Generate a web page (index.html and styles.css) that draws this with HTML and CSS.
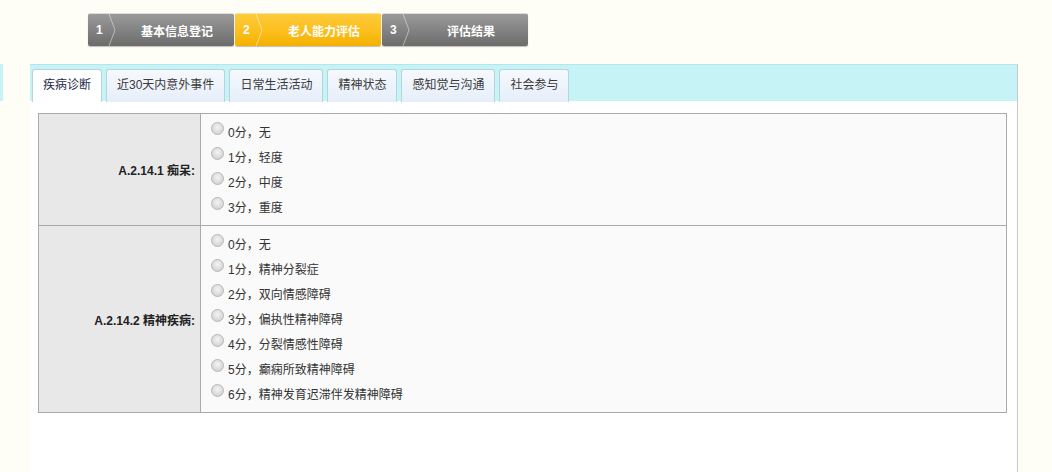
FILE: index.html
```html
<!DOCTYPE html>
<html lang="zh-CN">
<head>
  <meta charset="UTF-8">
  <title>老人能力评估</title>
  <link rel="stylesheet" href="styles.css">
</head>
<body>
<div class="steps">
  <div class="step">
    <span class="step-no">1</span>
    <svg class="step-arrow" width="8" height="32" viewBox="0 0 8 32"><polyline points="1,0 7,16 1,32" fill="none" stroke="rgba(255,255,255,.45)" stroke-width="1"/></svg>
    <span class="step-name">基本信息登记</span>
  </div>
  <div class="step current">
    <span class="step-no">2</span>
    <svg class="step-arrow" width="8" height="32" viewBox="0 0 8 32"><polyline points="1,0 7,16 1,32" fill="none" stroke="rgba(255,255,255,.5)" stroke-width="1"/></svg>
    <span class="step-name">老人能力评估</span>
  </div>
  <div class="step">
    <span class="step-no">3</span>
    <svg class="step-arrow" width="8" height="32" viewBox="0 0 8 32"><polyline points="1,0 7,16 1,32" fill="none" stroke="rgba(255,255,255,.45)" stroke-width="1"/></svg>
    <span class="step-name">评估结果</span>
  </div>
</div>

<div class="layout">
  <div class="side-edge"></div>
  <div class="panel">
    <ul class="tabs">
      <li class="tab active">疾病诊断</li>
      <li class="tab">近30天内意外事件</li>
      <li class="tab">日常生活活动</li>
      <li class="tab">精神状态</li>
      <li class="tab">感知觉与沟通</li>
      <li class="tab">社会参与</li>
    </ul>
    <div class="tab-body">
      <table class="form-table">
        <tr>
          <th>A.2.14.1 痴呆:</th>
          <td>
            <label class="opt"><input type="radio" name="a1"><span>0分，无</span></label>
            <label class="opt"><input type="radio" name="a1"><span>1分，轻度</span></label>
            <label class="opt"><input type="radio" name="a1"><span>2分，中度</span></label>
            <label class="opt"><input type="radio" name="a1"><span>3分，重度</span></label>
          </td>
        </tr>
        <tr>
          <th>A.2.14.2 精神疾病:</th>
          <td>
            <label class="opt"><input type="radio" name="a2"><span>0分，无</span></label>
            <label class="opt"><input type="radio" name="a2"><span>1分，精神分裂症</span></label>
            <label class="opt"><input type="radio" name="a2"><span>2分，双向情感障碍</span></label>
            <label class="opt"><input type="radio" name="a2"><span>3分，偏执性精神障碍</span></label>
            <label class="opt"><input type="radio" name="a2"><span>4分，分裂情感性障碍</span></label>
            <label class="opt"><input type="radio" name="a2"><span>5分，癫痫所致精神障碍</span></label>
            <label class="opt"><input type="radio" name="a2"><span>6分，精神发育迟滞伴发精神障碍</span></label>
          </td>
        </tr>
      </table>
    </div>
  </div>
</div>
</body>
</html>
```

FILE: styles.css
```css
* {
  margin: 0;
  padding: 0;
  box-sizing: border-box;
}

html, body {
  height: 100%;
}

body {
  background-color: #fffef6;
  font-family: "Liberation Sans", "Noto Sans CJK SC", sans-serif;
  font-size: 12px;
  color: #333;
  overflow: hidden;
}

li {
  list-style: none;
}

.steps {
  display: flex;
  padding: 13px 0 0 88px;
  height: 64px;
}

.step {
  display: flex;
  align-items: center;
  width: 146px;
  height: 33px;
  margin-right: 1px;
  border-top: 1px solid #dcdcdc;
  border-radius: 2px;
  background: linear-gradient(#9a9a9a, #7e7e7e 60%, #6c6c6c);
  box-shadow: 0 1px 1px rgba(0, 0, 0, .25);
  color: #fff;
  font-weight: bold;
}

.step.current {
  background: linear-gradient(#fdcb3a, #fbbd1a 60%, #f4b000);
  border-top-color: #f2e2a8;
}

.step .step-no {
  width: 20px;
  padding-left: 8px;
}

.step .step-arrow {
  display: block;
}

.step .step-name {
  flex: 1;
  text-align: center;
  padding-left: 4px;
}

.layout {
  display: flex;
  height: calc(100% - 64px);
}

.side-edge {
  width: 3px;
  height: 37px;
  background-color: #c5f3f6;
  margin-right: 27px;
}

.panel {
  width: 988px;
  background-color: #fff;
  border-right: 1px solid #c8c8c8;
}

.tabs {
  display: flex;
  gap: 4px;
  height: 37px;
  padding: 4px 0 0 2px;
  background-color: #c5f3f6;
  border-top: 1px solid #b6e6ea;
}

.tab {
  height: 33px;
  line-height: 31px;
  padding: 0 10px;
  border: 1px solid #b4d4df;
  border-bottom: none;
  border-radius: 3px 3px 0 0;
  background: linear-gradient(#f6f9fd, #e6eef9);
  color: #3a3a3a;
}

.tab.active {
  background: #fff;
  color: #1e2b48;
}

.tab-body {
  padding: 12px 10px 0 8px;
}

.form-table {
  width: 969px;
  border-collapse: collapse;
  border: 1px solid #aaa;
}

.form-table th {
  width: 162px;
  background-color: #e8e8e8;
  border: 1px solid #aaa;
  text-align: right;
  padding-right: 5px;
  font-weight: bold;
  color: #222;
}

.form-table td {
  background-color: #fafafa;
  border: 1px solid #aaa;
  padding: 5px 0 6px 9px;
  vertical-align: top;
}

.opt {
  display: flex;
  align-items: center;
  height: 25px;
}

.opt input {
  appearance: none;
  width: 13px;
  height: 13px;
  margin: -6px 4px 0 1px;
  border: 1px solid #b8b8b8;
  border-radius: 50%;
  background: radial-gradient(circle at 50% 40%, #f4f4f4, #d6d6d6 70%, #c4c4c4);
}
```
